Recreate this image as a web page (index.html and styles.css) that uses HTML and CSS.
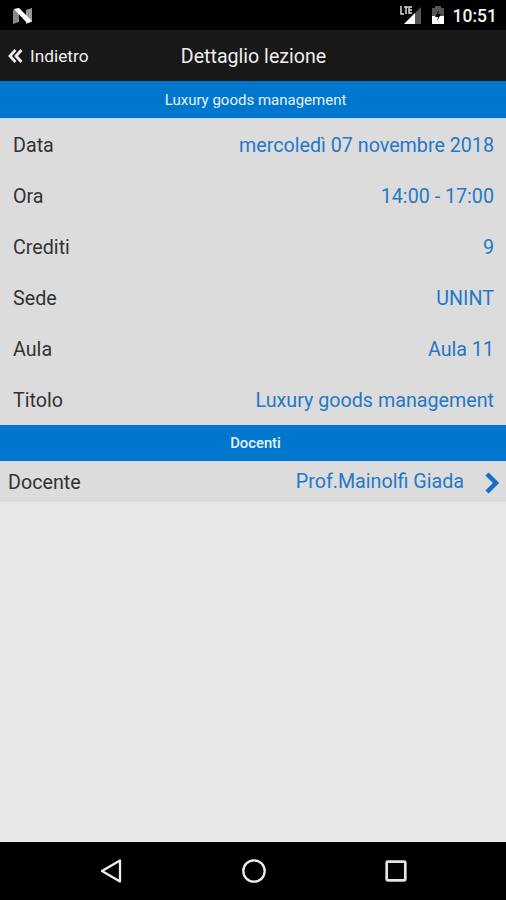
FILE: index.html
```html
<!DOCTYPE html>
<html lang="it">

<head>
    <meta charset="UTF-8">
    <meta name="viewport" content="width=device-width, initial-scale=1.0">
    <title>Dettaglio lezione</title>
    <link rel="stylesheet" href="styles.css">
</head>

<body>
    <div class="status-bar">
        <svg class="logo" width="20" height="16" viewBox="0 0 20 16">
            <path d="M0 2l6-2v14l-6 2z" fill="#888" />
            <path d="M13 2l6-2v14l-6 2z" fill="#999" />
            <path d="M1 1l5-1 13 13-5 2z" fill="#fff" />
        </svg>
        <div class="status-icons">
            <svg class="signal" width="22" height="19" viewBox="0 0 22 19">
                <path d="M21 1v17H4z" fill="#555" />
                <path d="M15 7v11H4z" fill="#fff" />
                <path d="M1 0v8h3M4 1h4M6 1v7M12 1H9v6h3M9 4h3" fill="none" stroke="#ddd" stroke-width="1.500" />
            </svg>
            <svg class="battery" width="12" height="19" viewBox="0 0 12 19">
                <path d="M3 0h6v2h3v8H0V2h3z" fill="#555" />
                <path d="M0 10h12v8H0z" fill="#fff" />
                <path d="M7 4L3 11h3l-1 4 4-7H6z" fill="#000" />
            </svg>
            <span class="clock">10:51</span>
        </div>
    </div>

    <header class="header">
        <a class="back">
            <svg width="15" height="16" viewBox="0 0 15 16">
                <path d="M7.500 2L2 8l5.500 6M13.500 2L8 8l5.500 6" fill="none" stroke="#eee" stroke-width="2.800" />
            </svg>
            <span class="back-label">Indietro</span>
        </a>
        <h1 class="title">Dettaglio lezione</h1>
    </header>

    <main class="content">
        <h2 class="divider course">Luxury goods management</h2>
        <div class="row"><span class="label">Data</span><span class="value">mercoledì 07 novembre 2018</span></div>
        <div class="row"><span class="label">Ora</span><span class="value">14:00 - 17:00</span></div>
        <div class="row"><span class="label">Crediti</span><span class="value">9</span></div>
        <div class="row"><span class="label">Sede</span><span class="value">UNINT</span></div>
        <div class="row"><span class="label">Aula</span><span class="value">Aula 11</span></div>
        <div class="row"><span class="label">Titolo</span><span class="value">Luxury goods management</span></div>
        <h2 class="divider teachers">Docenti</h2>
        <div class="row teacher">
            <span class="label">Docente</span>
            <span class="value">Prof.Mainolfi Giada</span>
            <svg class="chevron" width="15" height="22" viewBox="0 0 15 22">
                <path d="M2 2l9 9-9 9" fill="none" stroke="#1270c8" stroke-width="4.500" />
            </svg>
        </div>
    </main>

    <nav class="nav-bar">
        <svg width="22" height="26" viewBox="0 0 22 26">
            <path d="M20 2.500v21L2 13z" fill="none" stroke="#eee" stroke-width="2.300" stroke-linejoin="round" />
        </svg>
        <svg width="26" height="26" viewBox="0 0 26 26">
            <circle cx="13" cy="13" r="10.700" fill="none" stroke="#eee" stroke-width="2.300" />
        </svg>
        <svg width="22" height="26" viewBox="0 0 22 26">
            <rect x="1.700" y="3.700" width="18.600" height="18.600" rx="1" fill="none" stroke="#e4e4e4" stroke-width="2.700" />
        </svg>
    </nav>
</body>

</html>
```
FILE: styles.css
```css
body {
    margin: 0;
    height: 900px;
    display: flex;
    flex-direction: column;
    font-family: Roboto, sans-serif;
    background-color: #e8e8e8;
    overflow: hidden;
}

.status-bar {
    height: 30px;
    box-sizing: border-box;
    padding: 0 9px 0 13px;
    display: flex;
    align-items: center;
    justify-content: space-between;
    background-color: #000;
    color: #f4f4f4;
}

.logo {
    padding-top: 2px;
}

.status-icons {
    display: flex;
    align-items: center;
}

.battery {
    margin: 0 9px 0 10px;
}

.clock {
    font-size: 17.5px;
    font-weight: 500;
    line-height: 30px;
    padding-top: 2px;
}

.header {
    height: 51px;
    display: grid;
    grid-template-columns: 1fr auto 1fr;
    align-items: center;
    background-color: #181818;
    color: #eee;
}

.back {
    display: flex;
    align-items: center;
    gap: 7px;
    padding-left: 8px;
}

.back-label {
    font-size: 17.3px;
    padding-top: 1px;
}

.title {
    margin: 0;
    padding: 2px 0 0 1px;
    font-size: 19.6px;
    font-weight: 400;
}

.content {
    flex: 1;
}

.divider {
    height: 36px;
    margin: 0;
    display: flex;
    align-items: center;
    justify-content: center;
    background-color: #0077cf;
    border-bottom: 1px solid #c9d9ed;
    color: #e6f1fb;
    font-size: 15px;
    font-weight: 400;
    text-indent: 5px;
}

.course {
    height: 37px;
    line-height: 20px;
}

.teachers {
    font-size: 14.8px;
    font-weight: 500;
    line-height: 20px;
}

.row {
    height: 51px;
    box-sizing: border-box;
    padding: 2px 12px 0 13px;
    display: flex;
    align-items: center;
    background-color: #dcdcdc;
    font-size: 19.7px;
}

.label {
    color: #333;
}

.value {
    margin-left: auto;
    color: #2478c8;
}

.teacher {
    height: 40px;
    padding: 1px 6px 0 8px;
}

.teacher .value {
    padding-bottom: 3px;
}

.chevron {
    margin-left: 21px;
}

.nav-bar {
    height: 58px;
    box-sizing: border-box;
    padding: 0 99px 0 100px;
    display: flex;
    align-items: center;
    justify-content: space-between;
    background-color: #000;
}
```
